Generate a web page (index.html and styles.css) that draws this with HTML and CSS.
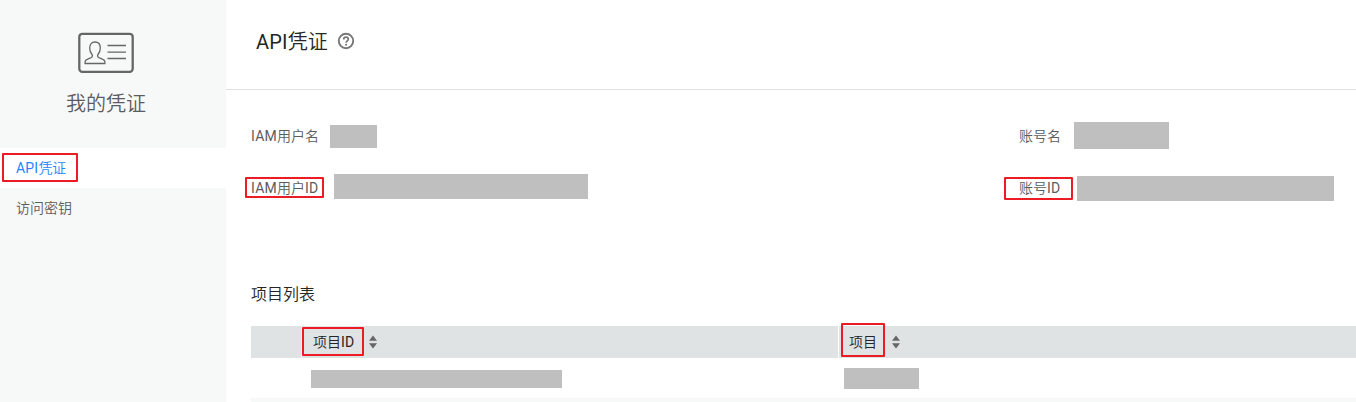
FILE: index.html
```html
<!DOCTYPE html>
<html lang="zh-CN">
<head>
<meta charset="utf-8">
<title>API凭证</title>
<link rel="stylesheet" href="styles.css">
</head>
<body>
<div class="app">
  <aside class="sidebar">
    <div class="brand">
      <svg class="brand-icon" width="56" height="42" viewBox="0 0 56 42" fill="none" stroke="#666">
        <rect x="1.300" y="1.800" width="53.400" height="38" rx="3" stroke-width="2.300"/>
        <path d="M17 10c-3.300 0-5.300 2.400-5.300 6 0 2.800 1 5 2.300 6.500.7.9.5 2.400-.6 3-2.400 1.200-6.300 1.700-6.300 4.300v1.700h19.800v-1.700c0-2.600-3.900-3.100-6.300-4.300-1.100-.6-1.300-2.100-.6-3 1.300-1.500 2.300-3.700 2.300-6.500 0-3.600-2-6-5.300-6z" stroke-width="1.300"/>
        <path d="M29.500 13.500h18.500M29.500 20.200h18.500M29.500 26.500h18.500" stroke-width="1.300"/>
      </svg>
      <div class="brand-name">我的凭证</div>
    </div>
    <nav class="menu">
      <a class="menu-item active"><span class="mark mark-menu"><span class="latin">API</span>凭证</span></a>
      <a class="menu-item"><span>访问密钥</span></a>
    </nav>
  </aside>
  <main class="main">
    <header class="header">
      <h1 class="title"><span class="latin">API</span>凭证</h1>
      <svg class="help" width="18" height="18" viewBox="0 0 18 18" fill="none" stroke="#777" stroke-width="1.900">
        <circle cx="9" cy="9" r="7.200"/>
        <path d="M6.700 7.400c0-1.300 1-2.200 2.300-2.200s2.300.9 2.300 2.100c0 1.600-2.200 1.700-2.200 3.500" stroke-width="1.700"/>
        <path d="M9.100 11.900v1.700" stroke-width="1.900"/>
      </svg>
    </header>
    <section class="details">
      <div class="field"><span class="label"><span class="latin">IAM</span>用户名</span><i class="mask mask-user"></i></div>
      <div class="field"><span class="label">账号名</span><i class="mask mask-account"></i></div>
      <div class="field"><span class="label mark mark-user"><span class="latin">IAM</span>用户<span class="latin">ID</span></span><i class="mask mask-user-id"></i></div>
      <div class="field"><span class="label mark mark-account">账号<span class="latin">ID</span></span><i class="mask mask-account-id"></i></div>
    </section>
    <section class="projects">
      <h2 class="subtitle">项目列表</h2>
      <div class="row head">
        <div class="cell"></div>
        <div class="cell"><span class="mark mark-pid">项目<span class="latin">ID</span></span><svg class="sort" width="8" height="14" viewBox="0 0 8 14" fill="#666"><path d="M4 .5 8 5.800H0zM0 8.200h8L4 13.500z"/></svg></div>
        <div class="cell"><span class="mark mark-project">项目</span><svg class="sort" width="8" height="14" viewBox="0 0 8 14" fill="#666"><path d="M4 .5 8 5.800H0zM0 8.200h8L4 13.500z"/></svg></div>
      </div>
      <div class="row body">
        <div></div>
        <div><i class="mask mask-pid"></i></div>
        <div><i class="mask mask-project"></i></div>
      </div>
      <div class="row next"></div>
    </section>
  </main>
</div>
</body>
</html>
```
FILE: styles.css
```css
*, ::after { box-sizing: border-box; }
body {
  margin: 0;
  background: #fff;
  color: #5c5c5c;
  font: 350 14px/20px Roboto, "Noto Sans CJK SC", sans-serif;
}
.latin { font-weight: 400; letter-spacing: .2px; }
.app { display: flex; height: 402px; overflow: hidden; }
.sidebar { width: 226px; flex: none; background: #f7f9f8; }
.brand { height: 148px; padding: 32px 14px 0 0; display: flex; flex-direction: column; align-items: center; }
.brand-icon { display: block; }
.brand-name { margin-top: 15px; font-size: 20px; line-height: 30px; }
.menu-item { display: flex; align-items: center; height: 40px; padding-left: 16px; }
.menu-item.active { background: #fff; color: #2684ff; }
.main { flex: 1; min-width: 0; }
.header { display: flex; align-items: center; height: 90px; padding: 0 0 7px 30px; border-bottom: 1px solid #dfe1e1; }
.title { margin: 0; width: 71px; padding-top: 1px; white-space: nowrap; color: #252525; font-size: 20px; line-height: 30px; font-weight: 350; }
.help { margin-left: 10px; }
.details {
  display: grid;
  grid-template-columns: 768px 1fr;
  grid-template-rows: 32px 32px;
  row-gap: 20px;
  padding: 30px 0 0 25px;
}
.field { display: flex; align-items: flex-start; }
.label { width: 68px; line-height: 32px; white-space: nowrap; }
.mask { display: block; background: #bfbfbf; }
.mask-user { width: 47px; height: 23px; margin: 5px 0 0 11px; }
.mask-account { width: 95px; height: 27px; margin: 2px 0 0 -13px; }
.mask-user-id { width: 254px; height: 25px; margin: 2px 0 0 15px; }
.mask-account-id { width: 257px; height: 25px; margin: 4px 0 0 -10px; }
.mask-pid { width: 251px; height: 18px; margin: 12px 0 0 9px; }
.mask-project { width: 75px; height: 21px; margin: 10px 0 0 5px; }
.projects { padding: 80px 0 0 25px; }
.subtitle { margin: 0 0 20px; color: #252525; font-size: 16px; line-height: 22px; font-weight: 350; }
.row { display: grid; grid-template-columns: 51px 537px 1fr; }
.head { height: 32px; background: #dfe3e3; color: #252525; }
.cell { display: flex; align-items: center; padding-left: 11px; }
.cell + .cell { box-shadow: -1px 0 #eef0f0; }
.cell:last-child { padding-left: 10px; box-shadow: -1px 0 #fff; }
.mark-pid { width: 41px; white-space: nowrap; }
.sort { margin-left: 15px; }
.body { height: 40px; }
.next { height: 4px; background: #f7f8f8; }

/* Red highlight frames drawn over the labels */
.mark { position: relative; }
.mark::after { content: ""; position: absolute; border: 2px solid #ed1c24; border-radius: 1px; }
.mark-menu::after { left: -14px; top: -5px; width: 76px; height: 29px; }
.mark-user::after { left: -6px; top: 5px; width: 79px; height: 21px; }
.mark-account::after { left: -15px; top: 5px; width: 69px; height: 23px; }
.mark-pid::after { left: -11px; top: -5px; width: 62px; height: 29px; }
.mark-project::after { left: -8px; top: -9px; width: 44px; height: 34px; }
```
